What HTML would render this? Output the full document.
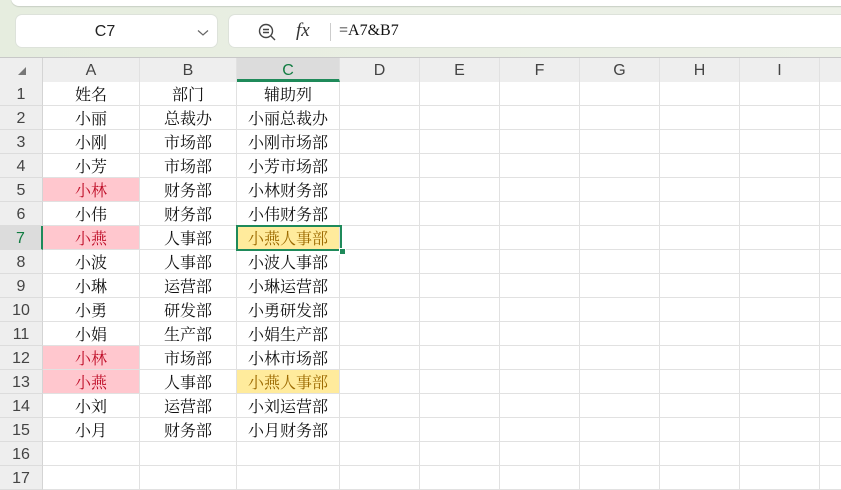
<!DOCTYPE html><html><head><meta charset="utf-8"><style>
body{margin:0;width:841px;height:472px;overflow:hidden;background:#fff;font-family:"Liberation Sans",sans-serif;position:relative}
.top{position:absolute;left:0;top:0;width:841px;height:57px;background:linear-gradient(90deg,#e6eddf,#edf1e8)}
.tb{position:absolute;left:11px;top:-4px;width:840px;height:10px;background:#fff;border-radius:0 0 8px 8px;box-shadow:0 1px 1px #c8cfc4}
.box{position:absolute;top:15px;height:32px;background:#fff;border-radius:6px;box-shadow:0 0 0 1px #dde2da}
.hdr{position:absolute;top:57px;left:0;width:841px;height:25px;background:#eeeeee;border-top:1px solid #c8c8c8;box-sizing:border-box}
.c{position:absolute;box-sizing:border-box;text-align:center;font-family:"Noto Serif CJK SC","Liberation Serif",serif;font-size:16px;color:#111;line-height:23px;padding-top:0px;border-right:1px solid #e1e1e1;border-bottom:1px solid #e1e1e1}
.h{font-family:"Liberation Sans",sans-serif;color:#444;font-size:16px;line-height:24px;padding-top:1px}
.rh{position:absolute;left:0;width:43px;box-sizing:border-box;text-align:center;background:#eeeeee;color:#444;font-size:16px;line-height:23px;padding-top:1px;border-bottom:1px solid #dcdcdc;border-right:1px solid #d4d4d4}
.pk{background:#ffc7ce;color:#c0102a}
.yl{background:#ffeb9c;color:#9c6a00}
</style></head><body>
<div class="top"><div class="tb"></div>
<div class="box" style="left:16px;width:201px"><span style="position:absolute;left:0;width:178px;text-align:center;top:8px;font-size:16px;color:#222">C7</span><svg style="position:absolute;left:181px;top:14px" width="12" height="8"><path d="M1 1.5L6 6L11 1.5" fill="none" stroke="#666" stroke-width="1.2"/></svg></div>
<div class="box" style="left:229px;width:630px">
<svg style="position:absolute;left:29px;top:8px" width="18" height="18"><circle cx="8" cy="8" r="6.5" fill="none" stroke="#444" stroke-width="1.4"/><path d="M5 6.5h6M5 9.5h6M13 13l4 4" stroke="#444" stroke-width="1.4"/></svg>
<span style="position:absolute;left:67px;top:5px;font-family:'Liberation Serif',serif;font-style:italic;font-size:19px;color:#333">fx</span>
<div style="position:absolute;left:101px;top:8px;width:1px;height:18px;background:#ccc"></div>
<span style="position:absolute;left:110px;top:7px;font-family:'Liberation Serif',serif;font-size:16px;color:#111">=A7&amp;B7</span>
</div></div>
<div class="hdr"></div>
<div id="g"></div>
<script>
var xs=[43,140,237,340,420,500,580,660,740,820,900],L="ABCDEFGHIJ";
var data=[["姓名","部门","辅助列"],["小丽","总裁办","小丽总裁办"],["小刚","市场部","小刚市场部"],["小芳","市场部","小芳市场部"],["小林","财务部","小林财务部"],["小伟","财务部","小伟财务部"],["小燕","人事部","小燕人事部"],["小波","人事部","小波人事部"],["小琳","运营部","小琳运营部"],["小勇","研发部","小勇研发部"],["小娟","生产部","小娟生产部"],["小林","市场部","小林市场部"],["小燕","人事部","小燕人事部"],["小刘","运营部","小刘运营部"],["小月","财务部","小月财务部"],["","",""],["","",""]];
var pink={5:1,7:1,12:1,13:1},yel={7:1,13:1};
var h='<div style="position:absolute;left:0;top:58px;width:43px;height:24px;background:#eee;border-right:1px solid #d4d4d4;box-sizing:border-box"><svg style="position:absolute;left:18px;top:9px" width="8" height="8"><path d="M8 0V8H0Z" fill="#777"/></svg></div>';
for(var j=0;j<10;j++){var s=j==2?'background:#dcdcdc;color:#107c41;border-bottom:3px solid #1f8a5a;':'';
h+='<div class="c h" style="left:'+xs[j]+'px;top:58px;width:'+(xs[j+1]-xs[j])+'px;height:24px;border-bottom:none;'+s+'">'+L[j]+'</div>';}
for(var r=1;r<=17;r++){var y=82+(r-1)*24;
h+='<div class="rh" style="top:'+y+'px;height:24px;'+(r==7?'background:#dcdcdc;color:#107c41;border-right:2px solid #1f8a5a;':'')+'">'+r+'</div>';
for(var j=0;j<10;j++){var t=j<3?data[r-1][j]:"",cl="";
if(j==0&&pink[r])cl="pk";if(j==2&&yel[r])cl="yl";
h+='<div class="c '+cl+'" style="left:'+xs[j]+'px;top:'+y+'px;width:'+(xs[j+1]-xs[j])+'px;height:24px">'+t+'</div>';}}
h+='<div style="position:absolute;left:236px;top:225px;width:106px;height:26px;border:2px solid #1f8a5a;box-sizing:border-box"></div><div style="position:absolute;left:339px;top:248px;width:5px;height:5px;background:#1f8a5a;border:1px solid #fff"></div>';
document.getElementById('g').innerHTML=h;
</script>
</body></html>
